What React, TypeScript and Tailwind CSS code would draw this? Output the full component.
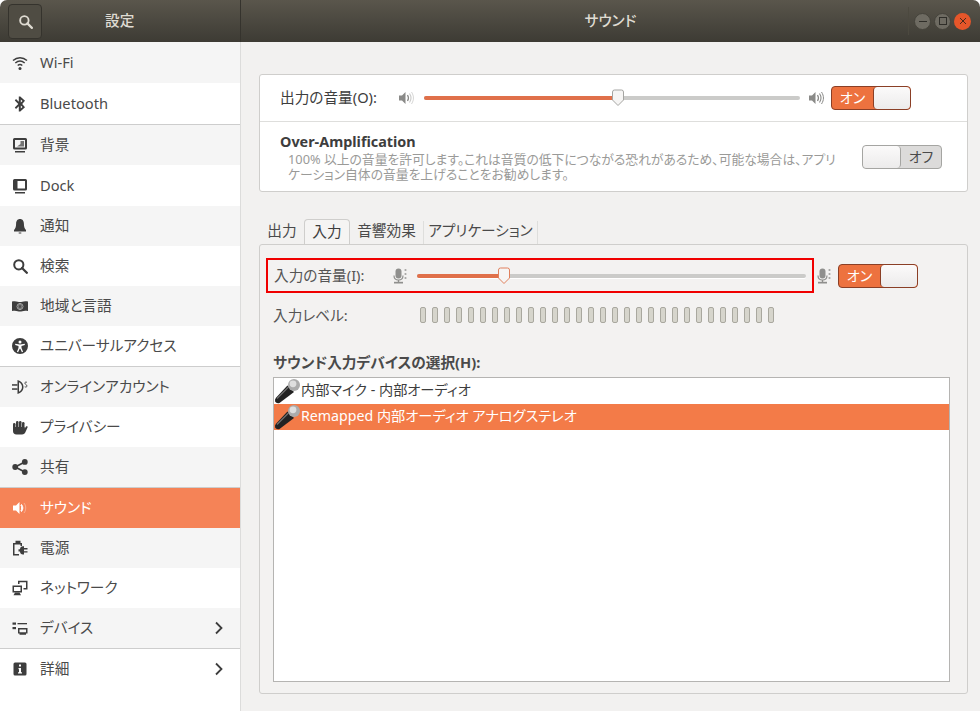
import type { ReactNode } from "react";

const ICON = "#3d3d3d";

const icons: Record<string, ReactNode> = {
  wifi: (
    <g fill="none" stroke={ICON} strokeWidth="1.500">
      <path d="M1 5.500C5.200 1.800 10.800 1.800 15 5.500" />
      <path d="M3.300 8C6.200 5.600 9.800 5.600 12.700 8" />
      <path d="M5.700 10.500C7.100 9.400 8.900 9.400 10.300 10.500" />
      <circle cx="8" cy="13.500" r="1.500" fill={ICON} stroke="none" />
    </g>
  ),
  bluetooth: (
    <path d="M6.800 .5h1.500l4.700 4.200L10.200 8l2.800 3.300L8.300 15.500H6.800V10.300L4 13 2.800 11.500 6.300 8 2.800 4.500 4 3 6.800 5.700zM8.800 3.500v3l1.700-1.600zM8.800 9.500v3l1.700-1.400z" fill={ICON} />
  ),
  background: (
    <g fill={ICON}>
      <path fillRule="evenodd" d="M2.500 1h11A1.500 1.500 0 0 1 15 2.500V11a1.500 1.500 0 0 1-1.500 1.500h-11A1.500 1.500 0 0 1 1 11V2.500A1.500 1.500 0 0 1 2.500 1zM3 3v7.500h10V3z" />
      <path d="M5 9.500l3.500-2.500V4h3.500v5.500z" opacity=".7" />
      <rect x="3" y="14" width="10" height="1.500" />
    </g>
  ),
  dock: (
    <g fill={ICON}>
      <path fillRule="evenodd" d="M2.500 1h11A1.500 1.500 0 0 1 15 2.500V11a1.500 1.500 0 0 1-1.500 1.500h-11A1.500 1.500 0 0 1 1 11V2.500A1.500 1.500 0 0 1 2.500 1zM5.500 3v7.500H13V3z" />
      <rect x="3" y="14" width="10" height="1.500" />
    </g>
  ),
  bell: (
    <path d="M8 1c2.800 0 3.900 2.300 3.900 4.700 0 3.100.9 5.200 2.100 6.300v1.500H2V12c1.200-1.100 2.100-3.200 2.100-6.300C4.100 3.300 5.200 1 8 1zM6.700 14.500h2.600v1H6.700z" fill={ICON} />
  ),
  search: (
    <g fill="none" stroke={ICON} strokeWidth="2">
      <circle cx="6.800" cy="6.800" r="4.600" />
      <path d="M10 10l4.800 4.800" strokeLinecap="round" strokeWidth="2.300" />
    </g>
  ),
  region: (
    <g>
      <path d="M0 3.500C4 2.500 6 4 8 4s4-1.500 8-.5V13c-4-1-6 .5-8 .5S4 12 0 13z" fill={ICON} />
      <circle cx="8" cy="8.500" r="3" fill="none" stroke="#bbb" strokeWidth=".8" />
      <ellipse cx="8" cy="8.500" rx="1.300" ry="3" fill="none" stroke="#bbb" strokeWidth=".7" />
    </g>
  ),
  access: (
    <path fillRule="evenodd" d="M8 0a8 8 0 1 1 0 16A8 8 0 0 1 8 0zM8 2.500a1.500 1.500 0 1 0 0 3 1.500 1.500 0 0 0 0-3zM3.200 5.800v1.300l3.300.8v2.200L4.900 13.800l1.200.5L7.700 10.800h.6l1.600 3.500 1.200-.5-1.600-3.700V7.900l3.300-.8V5.800L8 6.600z" fill={ICON} />
  ),
  online: (
    <g fill={ICON}>
      <path fillRule="evenodd" d="M5.500 1c3.500 1 6 3.500 6 7s-2.500 6-6 7zM7 3.300v9.400c1.800-.9 3-2.600 3-4.700s-1.200-3.800-3-4.700z" />
      <rect x="0" y="5.200" width="5.500" height="1.500" />
      <rect x="0" y="9.300" width="5.500" height="1.500" />
      <path d="M15 3.300c-1.200-.5-2.200-.1-2.200.8 0 1.400 2.200 1.400 2.200 2.900 0 1-1.100 1.300-2.300.8" fill="none" stroke={ICON} strokeWidth=".9" />
    </g>
  ),
  privacy: (
    <g fill={ICON}>
      <rect x="1" y="4" width="2.500" height="8" rx="1.200" />
      <rect x="4" y="2" width="2.500" height="8" rx="1.200" />
      <rect x="7" y="2" width="2.500" height="8" rx="1.200" />
      <rect x="10" y="3" width="2.500" height="8" rx="1.200" />
      <path d="M1 8h11.500l.2 1.500 1.300-2c.6-.8 2-.2 1.600.7L13.500 13c-.6 1.300-1.600 2.500-3.500 2.500H4.500C2.200 15.500 1 14 1 12z" />
    </g>
  ),
  share: (
    <g fill={ICON}>
      <circle cx="3.200" cy="8" r="2.900" />
      <circle cx="12.800" cy="2.900" r="2.900" />
      <circle cx="12.800" cy="13.100" r="2.900" />
      <path d="M3.200 8l9.600-5.100M3.200 8l9.600 5.100" stroke={ICON} strokeWidth="1.700" />
    </g>
  ),
  sound: (
    <g fill="#fff">
      <path d="M1 5.500h3L7.500 2v12L4 10.500H1z" />
      <path d="M9.500 4.500c1.800 2.200 1.800 4.800 0 7l-.6-.5c1-2 1-4 0-6z" stroke="#fff" strokeWidth="1" />
      <path d="M12 3c2.300 3 2.300 7 0 10" fill="none" stroke="#fff" strokeOpacity=".35" strokeWidth="1" />
    </g>
  ),
  power: (
    <g fill={ICON}>
      <path d="M1 3h2.500V.8h5V3H10v3H8.500V4.500h-6v9.500H7v1.500H1z" />
      <path d="M8 9.200c0-1.800 1.300-3 3-3h1v1.900h3.500v1.300H12v1.900h3.500v1.300H12v1.900h-1c-1.700 0-3-1.300-3-3H6.500V9.200z" />
    </g>
  ),
  network: (
    <g fill={ICON}>
      <path fillRule="evenodd" d="M.5 5.500h9.500v7H.5zM2 7v4h6.500V7z" />
      <path d="M3 12.500h4.500l1.500 2.800H1.500z" />
      <path d="M6 .8h9.500v8.700h-4V8H14V2.300H7.500V4H6z" />
    </g>
  ),
  devices: (
    <g fill={ICON}>
      <path fillRule="evenodd" d="M6 8h9.500v5.500H14v1.300H7.500v-1.300H6zM7.500 9.500v2.700H14V9.500z" />
      <rect x=".5" y="2.500" width="3.500" height="2.200" />
      <rect x="5.500" y="3" width="9.500" height="1.300" />
      <rect x=".5" y="7" width="3.500" height="2.200" />
    </g>
  ),
  info: (
    <path fillRule="evenodd" d="M3 1.500h10A1.500 1.500 0 0 1 14.500 3v10a1.500 1.500 0 0 1-1.500 1.500H3A1.500 1.500 0 0 1 1.500 13V3A1.500 1.500 0 0 1 3 1.500zM7 3.500v2h2v-2zM6.500 7v1.300H7v3H6v1.200h4v-1.200H9V7z" fill={ICON} />
  ),
};

type Row = { id: string; label: string; tone: "grey" | "white" | "active"; height: string; latin?: boolean; sep?: boolean; arrow?: boolean };

const rows: Row[] = [
  { id: "wifi", label: "Wi-Fi", tone: "grey", height: "h-[41px]", latin: true },
  { id: "bluetooth", label: "Bluetooth", tone: "white", height: "h-[42px]", latin: true, sep: true },
  { id: "background", label: "背景", tone: "grey", height: "h-[40px]" },
  { id: "dock", label: "Dock", tone: "white", height: "h-[41px]", latin: true },
  { id: "bell", label: "通知", tone: "grey", height: "h-[40px]" },
  { id: "search", label: "検索", tone: "white", height: "h-[40px]" },
  { id: "region", label: "地域と言語", tone: "grey", height: "h-[40px]" },
  { id: "access", label: "ユニバーサルアクセス", tone: "white", height: "h-[41px]", sep: true },
  { id: "online", label: "オンラインアカウント", tone: "grey", height: "h-[40px]" },
  { id: "privacy", label: "プライバシー", tone: "white", height: "h-[40px]" },
  { id: "share", label: "共有", tone: "grey", height: "h-[41px]", sep: true },
  { id: "sound", label: "サウンド", tone: "active", height: "h-[40px]" },
  { id: "power", label: "電源", tone: "grey", height: "h-[40px]" },
  { id: "network", label: "ネットワーク", tone: "white", height: "h-[40px]" },
  { id: "devices", label: "デバイス", tone: "grey", height: "h-[41px]", sep: true, arrow: true },
  { id: "info", label: "詳細", tone: "white", height: "h-[40px]", arrow: true },
];

function SidebarRow({ row }: { row: Row }) {
  const bg = row.tone === "active" ? "bg-[#f58357] text-white" : row.tone === "grey" ? "bg-[#f5f5f5] text-[#4a4a4a]" : "bg-white text-[#4a4a4a]";
  return (
    <div className={`flex shrink-0 items-center pl-3 pr-4 ${row.height} ${bg} ${row.sep ? "border-b border-[#cdcdcd]" : ""}`}>
      <svg width="16" height="16" viewBox="0 0 16 16" className="shrink-0">
        {icons[row.id]}
      </svg>
      <span className={`ml-3 ${row.latin ? "pb-px" : "pb-[3px]"}`}>{row.label}</span>
      {row.arrow && (
        <svg width="10" height="14" viewBox="0 0 10 14" className="ml-auto">
          <path d="M2 1.500L7.500 7 2 12.500" fill="none" stroke="#3d3d3d" strokeWidth="1.800" />
        </svg>
      )}
    </div>
  );
}

function Speaker({ level }: { level: "low" | "high" }) {
  return (
    <svg width="16" height="16" viewBox="0 0 16 16" className="shrink-0">
      <path d="M1 5.500h3L7.500 2v12L4 10.500H1z" fill="#8a8a88" />
      <path d="M9.500 5c1.300 2 1.300 4 0 6" fill="none" stroke="#8a8a88" strokeWidth="1.300" />
      <path d="M11.500 3.500c2 3 2 6 0 9" fill="none" stroke="#8a8a88" strokeOpacity={level === "high" ? 1 : 0.45} strokeWidth="1.100" />
      <path d="M13.500 2c2.600 4 2.600 8 0 12" fill="none" stroke="#8a8a88" strokeOpacity={level === "high" ? 1 : 0.35} strokeWidth="1" />
    </svg>
  );
}

function MicSymbol() {
  return (
    <svg width="16" height="16" viewBox="0 0 16 16" className="shrink-0">
      <rect x="3.500" y="0.500" width="6" height="10" rx="3" fill="#8f8f8d" />
      <path d="M2 7.500c0 3 2 4.500 4.500 4.500S11 10.500 11 7.500" fill="none" stroke="#8f8f8d" strokeWidth="1.200" />
      <rect x="5.800" y="12" width="1.400" height="2" fill="#8f8f8d" />
      <rect x="2" y="13.800" width="9" height="1.700" fill="#8f8f8d" />
      <circle cx="13.500" cy="2" r="1.100" fill="#a5a5a3" />
      <circle cx="13.500" cy="6" r="1.100" fill="#a5a5a3" />
      <circle cx="13.500" cy="10" r="1.100" fill="#a5a5a3" />
    </svg>
  );
}

function Slider({ width, percent }: { width: string; percent: number }) {
  return (
    <div className={`relative h-[4px] rounded-full bg-[#cbcbc9] shadow-[0_1px_0_#fff] ${width}`}>
      <div className="h-full rounded-full bg-[#e0704a]" style={{ width: `${percent}%` }} />
      <svg width="14" height="18" viewBox="0 0 14 18" className="absolute top-[-7px]" style={{ left: `calc(${percent}% - 7px)` }}>
        <path d="M1.500 3a2 2 0 0 1 2-2h7a2 2 0 0 1 2 2v8l-5.500 5.500L1.500 11z" fill="#f6f5f4" stroke={percent < 30 ? "#e0805c" : "#a5a5a2"} />
      </svg>
    </div>
  );
}

function Toggle({ on }: { on: boolean }) {
  if (on) {
    return (
      <div className="flex h-[24px] w-[80px] shrink-0 items-stretch rounded-[4px] border border-[#8a3f26] bg-[#ed723f] text-[14px] text-white">
        <span className="flex w-[41px] items-center justify-center pb-px">オン</span>
        <span className="flex-1 rounded-[4px] border-l border-[#8a3f26] bg-gradient-to-b from-[#fbfafa] to-[#ecebeb]" />
      </div>
    );
  }
  return (
    <div className="flex h-[24px] w-[80px] shrink-0 items-stretch rounded-[4px] border border-[#a5a5a2] bg-[#dcdbda] text-[14px] text-[#4a4a4a]">
      <span className="w-[38px] rounded-[4px] border-r border-[#a5a5a2] bg-gradient-to-b from-[#fbfafa] to-[#ecebeb]" />
      <span className="flex flex-1 items-center justify-center pb-px">オフ</span>
    </div>
  );
}

function Microphone() {
  return (
    <svg width="27" height="26" viewBox="0 0 27 26" className="shrink-0">
      <path d="M13.500 7.500L20 14L5.500 25Q2.500 25.800 1.200 23.800Q.5 21.500 2 19.800Z" fill="#222" />
      <path d="M14.500 9L3 20.500" stroke="#6f6f6f" strokeWidth="1.200" />
      <circle cx="20" cy="7" r="6" fill="#ababab" />
      <circle cx="19" cy="5.800" r="3.400" fill="#dedede" />
    </svg>
  );
}

const tabs = ["出力", "入力", "音響効果", "アプリケーション"];

export default function App() {
  return (
    <div className="flex h-[711px] w-[980px] flex-col overflow-hidden bg-white font-['Noto_Sans','Noto_Sans_CJK_JP',sans-serif] text-[14.67px] text-[#3d3d3d] [font-feature-settings:'palt']">
      {/* Title bar */}
      <header className="flex h-[42px] shrink-0 items-stretch rounded-t-[7px] bg-gradient-to-b from-[#5a564c] to-[#3d3b34] font-medium text-[#dfdbd2]">
        <div className="flex w-[241px] shrink-0 items-center border-r border-[#35332d] pl-[8px]">
          <button className="flex h-[35px] w-[34px] items-center justify-center rounded-[4px] border border-[#35332d] bg-[#4f4c43]">
            <svg width="15" height="15" viewBox="0 0 16 16">
              <circle cx="6.800" cy="6.800" r="4.500" fill="none" stroke="#dfdbd2" strokeWidth="2" />
              <path d="M10 10l4.800 4.800" stroke="#dfdbd2" strokeWidth="2.300" strokeLinecap="round" />
            </svg>
          </button>
          <span className="ml-[63px] pb-[3px]">設定</span>
        </div>
        <div className="flex flex-1 items-center justify-center pb-[3px] pl-[72px]">サウンド</div>
        <div className="my-[7px] flex w-[72px] shrink-0 items-center gap-[3px] border-l border-[#4c493f] pl-[5px]">
          <span className="flex h-[17px] w-[17px] items-center justify-center rounded-full border border-[#45433b] bg-[#6e6b62]">
            <span className="h-px w-[8px] bg-[#2f2e29]" />
          </span>
          <span className="flex h-[17px] w-[17px] items-center justify-center rounded-full border border-[#45433b] bg-[#6e6b62]">
            <span className="h-[8px] w-[8px] border border-[#2f2e29]" />
          </span>
          <span className="flex h-[17px] w-[17px] items-center justify-center rounded-full bg-[#e6562a]">
            <svg width="8" height="8" viewBox="0 0 8 8">
              <path d="M1 1l6 6M7 1L1 7" stroke="#4a2a1c" strokeWidth="1" />
            </svg>
          </span>
        </div>
      </header>

      <div className="flex min-h-0 flex-1">
        {/* Sidebar */}
        <aside className="flex w-[241px] shrink-0 flex-col border-r border-[#dcdcdb] bg-white">
          {rows.map((row) => (
            <SidebarRow key={row.id} row={row} />
          ))}
        </aside>

        {/* Content */}
        <main className="flex flex-1 flex-col bg-[#f2f1f0] pl-[18px] pr-[12px] pt-[32px]">
          <section className="h-[118px] rounded-[3px] border border-[#cfcecc] bg-white">
            <div className="flex h-[47px] items-center border-b border-[#dededc] pl-[20px]">
              <span className="w-[118px] pb-[2px]">出力の音量(O):</span>
              <Speaker level="low" />
              <div className="ml-[10px]">
                <Slider width="w-[376px]" percent={51.500} />
              </div>
              <div className="ml-[8px]">
                <Speaker level="high" />
              </div>
              <div className="ml-[7px]">
                <Toggle on />
              </div>
            </div>
            <div className="relative pl-[20px] pt-[9px]">
              <div className="text-[14.400px] font-bold leading-[21px]">Over-Amplification</div>
              <p className="ml-[8px] whitespace-nowrap text-[12.800px] leading-[15px] text-[#9a9a98]">
                100% 以上の音量を許可します。これは音質の低下につながる恐れがあるため、可能な場合は、アプリ
                <br />
                ケーション自体の音量を上げることをお勧めします。
              </p>
              <div className="absolute right-[25px] top-[23px]">
                <Toggle on={false} />
              </div>
            </div>
          </section>

          <nav className="mt-[27px] flex h-[25px] items-end pl-[1px]">
            {tabs.map((tab, i) =>
              i === 1 ? (
                <span key={tab} className="flex h-[25px] w-[46px] items-center justify-center rounded-t-[4px] border border-b-0 border-[#cfcecc] bg-[#f5f4f3] pb-[2px]">
                  {tab}
                </span>
              ) : (
                <span key={tab} className={`flex h-[23px] items-center justify-center border-r border-[#dededc] pb-[5px] text-[#4a4a4a] ${i === 0 ? "w-[44px] border-r-0" : i === 2 ? "w-[74px]" : "w-[114px]"}`}>
                  {tab}
                </span>
              ),
            )}
          </nav>

          <section className="h-[450px] rounded-[3px] border border-[#cfcecc] bg-[#f3f2f1] pl-[6px] pt-[13px]">
            <div className="flex items-center">
              <div className="flex h-[35px] w-[548px] shrink-0 items-center border-2 border-[#f00000] pl-[6px]">
                <span className="w-[118px] pb-px text-[#555]">入力の音量(I):</span>
                <MicSymbol />
                <div className="ml-[9px]">
                  <Slider width="w-[389px]" percent={22.400} />
                </div>
              </div>
              <div className="ml-[2px]">
                <MicSymbol />
              </div>
              <div className="ml-[6px]">
                <Toggle on />
              </div>
            </div>

            <div className="mt-[13px] flex h-[18px] items-center pl-[7px]">
              <span className="w-[147px] text-[#555]">入力レベル:</span>
              <div className="flex gap-[6px]">
                {Array.from({ length: 30 }, (_, i) => (
                  <span key={i} className="h-[16px] w-[6px] rounded-[2px] border border-[#a9a89f] bg-[#d6d5cc]" />
                ))}
              </div>
            </div>

            <h3 className="mt-[28px] pl-[7px] font-bold leading-[20px] text-[#4a4a4a]">サウンド入力デバイスの選択(H):</h3>

            <div className="ml-[7px] mt-[5px] h-[305px] w-[677px] border border-[#b5b4b2] bg-white text-[14.200px]">
              <div className="flex h-[26px] items-center text-[#3d3d3d]">
                <Microphone />
                <span className="pb-[2px]">内部マイク - 内部オーディオ</span>
              </div>
              <div className="flex h-[26px] items-center bg-[#f37b48] text-white">
                <Microphone />
                <span className="pb-[2px]">Remapped 内部オーディオ アナログステレオ</span>
              </div>
            </div>
          </section>
        </main>
      </div>
    </div>
  );
}
